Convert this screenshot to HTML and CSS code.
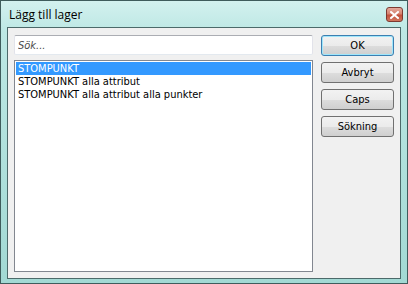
FILE: index.html
```html
<!DOCTYPE html>
<html lang="sv">
<head>
    <meta charset="UTF-8">
    <title>Lägg till lager</title>
    <link rel="stylesheet" href="styles.css">
</head>
<body>
    <div class="window">
        <div class="titlebar">
            <span class="title">Lägg till lager</span>
            <button class="close" title="Stäng">
                <svg width="9" height="8" viewBox="0 0 9 8">
                    <path d="M1 1 L8 7 M8 1 L1 7" stroke="#fff" stroke-width="2" stroke-linecap="square"/>
                </svg>
            </button>
        </div>
        <div class="client">
            <div class="left">
                <input type="text" class="search" placeholder="Sök...">
                <ul class="list">
                    <li class="selected">STOMPUNKT</li>
                    <li>STOMPUNKT alla attribut</li>
                    <li>STOMPUNKT alla attribut alla punkter</li>
                </ul>
            </div>
            <div class="buttons">
                <button class="btn default">OK</button>
                <button class="btn">Avbryt</button>
                <button class="btn">Caps</button>
                <button class="btn">Sökning</button>
            </div>
        </div>
    </div>
</body>
</html>
```

FILE: styles.css
```css
body {
    margin: 0;
    background: #fff;
}
.window {
    width: 408px;
    height: 284px;
    box-sizing: border-box;
    border: 1px solid #3f5c5c;
    padding: 0 6px 4px;
    display: flex;
    flex-direction: column;
    background: linear-gradient(to bottom, #d3f1ef 0px, #bde8e4 30px, #a2d9d4 100%);
}
.titlebar {
    height: 26px;
    display: flex;
    align-items: flex-start;
    justify-content: space-between;
}
.title {
    font-family: "Open Sans", "Liberation Sans", sans-serif;
    font-size: 12px;
    color: #000;
    margin: 5px 0 0 2px;
}
.close {
    width: 17px;
    height: 15px;
    margin: 6px -2px 0 0;
    padding: 0;
    border: 1px solid #7d3a31;
    border-radius: 3px;
    background: linear-gradient(to bottom, #e5a99c 0%, #d5836f 45%, #c2503a 55%, #d1775f 100%);
    display: flex;
    align-items: center;
    justify-content: center;
}
.client {
    flex: 1;
    border: 1px solid #4c6a6a;
    background: #f0f0f0;
    padding: 7px 6px 6px 6px;
    display: flex;
    gap: 8px;
}
.left {
    flex: 1;
    display: flex;
    flex-direction: column;
    gap: 5px;
}
.search {
    height: 20px;
    box-sizing: border-box;
    margin: 0;
    padding: 0 0 0 3px;
    border: 1px solid #e2e3ea;
    border-top-color: #abadb3;
    border-bottom-color: #e3e9ef;
    border-radius: 2px;
    background: #fff;
    font-family: "DejaVu Sans Condensed", "DejaVu Sans", sans-serif;
    font-size: 11px;
    outline: none;
}
.search::placeholder {
    color: #4a4a4a;
    font-style: italic;
}
.list {
    flex: 1;
    margin: 0;
    padding: 1px;
    list-style: none;
    border: 1px solid #828790;
    background: #fff;
    font-family: "DejaVu Sans Condensed", "DejaVu Sans", sans-serif;
    font-size: 11px;
    color: #000;
}
.list li {
    height: 13px;
    line-height: 13px;
    padding-left: 2px;
    white-space: nowrap;
}
.list li.selected {
    background: #3399ff;
    color: #fff;
}
.buttons {
    width: 73px;
    display: flex;
    flex-direction: column;
    gap: 6px;
}
.btn {
    height: 21px;
    margin: 0;
    padding: 0;
    border: 1px solid #707070;
    border-radius: 3px;
    background: linear-gradient(to bottom, #f2f2f2 0%, #ebebeb 50%, #dddddd 51%, #cfcfcf 100%);
    font-family: "DejaVu Sans Condensed", "DejaVu Sans", sans-serif;
    font-size: 11px;
    color: #000;
}
.btn.default {
    border-color: #3c7fb1;
    box-shadow: inset 0 0 0 1px #9fe6fb;
}
```
